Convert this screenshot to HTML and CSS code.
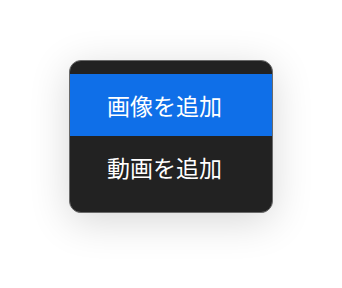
FILE: index.html
```html
<!DOCTYPE html>
<html lang="ja">
<head>
<meta charset="utf-8">
<link rel="stylesheet" href="styles.css">
</head>
<body>
<div class="menu">
  <div class="item active">画像を追加</div>
  <div class="item">動画を追加</div>
</div>
</body>
</html>
```

FILE: styles.css
```css
html, body {
  margin: 0;
  padding: 0;
  background: #ffffff;
}
body {
  width: 342px;
  height: 288px;
  overflow: hidden;
  font-family: "Noto Sans CJK JP", "Noto Sans", sans-serif;
}
.menu {
  box-sizing: border-box;
  width: 204px;
  margin: 60px 0 0 69px;
  padding: 13px 0 14px;
  background: #222222;
  border: 1px solid #6a6a6a;
  border-radius: 12px;
  box-shadow: 0 8px 40px rgba(0, 0, 0, 0.16);
}
.item {
  height: 62px;
  display: flex;
  align-items: center;
  padding-left: 37px;
  color: #ffffff;
  font-size: 23px;
  line-height: 1;
}
.item.active {
  background: #0f6fe8;
}
```
